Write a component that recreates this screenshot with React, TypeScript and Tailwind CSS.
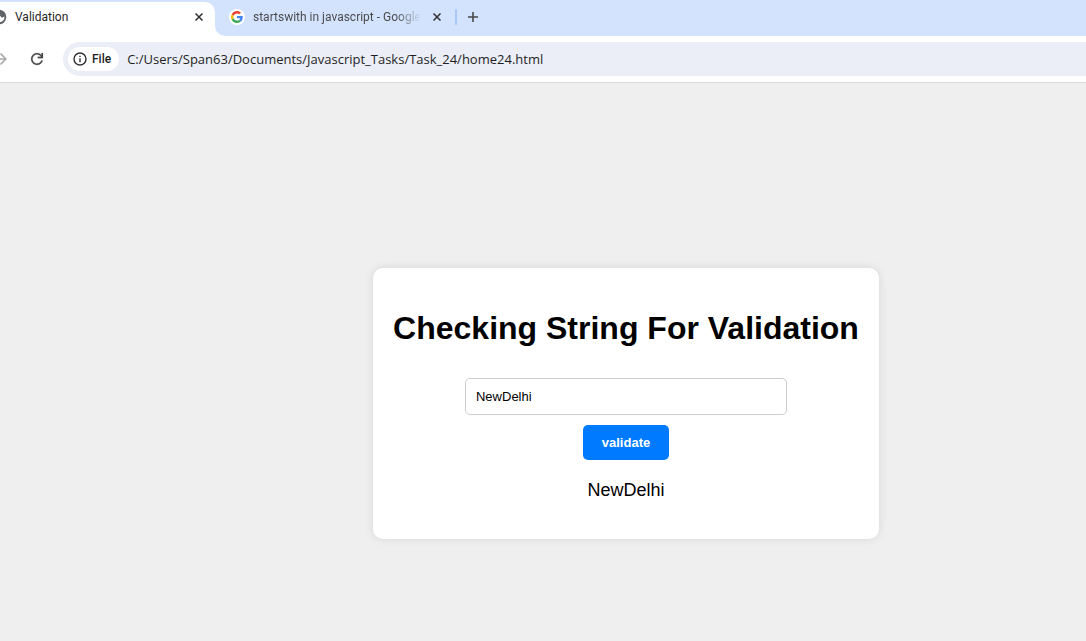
import { useState } from "react";

function GoogleMark() {
  return (
    <span className="flex size-4 shrink-0 items-center justify-center rounded-full bg-white">
      <svg viewBox="0 0 48 48" className="size-3" aria-hidden="true">
        <path fill="#EA4335" d="M24 9.5c3.54 0 6.71 1.22 9.21 3.6l6.85-6.85C35.9 2.38 30.47 0 24 0 14.62 0 6.51 5.38 2.56 13.22l7.98 6.19C12.43 13.72 17.74 9.5 24 9.5z" />
        <path fill="#4285F4" d="M46.98 24.55c0-1.57-.15-3.09-.38-4.55H24v9.02h12.94c-.58 2.96-2.26 5.48-4.78 7.18l7.73 6c4.51-4.18 7.09-10.36 7.09-17.65z" />
        <path fill="#FBBC05" d="M10.53 28.59c-.48-1.45-.76-2.99-.76-4.59s.27-3.14.76-4.59l-7.98-6.19C.92 16.46 0 20.12 0 24c0 3.88.92 7.54 2.56 10.78l7.97-6.19z" />
        <path fill="#34A853" d="M24 48c6.48 0 11.93-2.13 15.89-5.81l-7.73-6c-2.15 1.45-4.92 2.3-8.16 2.3-6.26 0-11.57-4.22-13.47-9.91l-7.98 6.19C6.51 42.62 14.62 48 24 48z" />
      </svg>
    </span>
  );
}

function CloseIcon() {
  return (
    <svg viewBox="0 0 8 8" className="size-2" fill="none" stroke="#303030" strokeWidth="1.5" aria-hidden="true">
      <path d="M0.5 0.5 7.5 7.5M7.5 0.5 0.5 7.5" />
    </svg>
  );
}

function TabStrip() {
  return (
    <div className="flex h-9 bg-white font-[Roboto,sans-serif] text-xs">
      <div className="flex w-[215px] shrink-0 bg-[#d3e3fd] pt-0.5">
        <div className="flex flex-1 items-center rounded-tr-[10px] bg-white pr-3 pb-1">
          <svg viewBox="0 0 7 16" className="mr-2 h-4 w-[7px] shrink-0" aria-hidden="true">
            <circle cx="-1" cy="8" r="7.3" fill="#5f6368" />
            <path d="M0 6.6 1.4 8.4h1.2l1.9-.9A5.8 5.8 0 0 1 0 13.2z" fill="#fff" />
          </svg>
          <span className="flex-1 text-[#1f1f1f]">Validation</span>
          <button type="button" aria-label="Close Validation">
            <CloseIcon />
          </button>
        </div>
      </div>
      <div className="flex flex-1 items-center rounded-bl-[10px] bg-[#d3e3fd] pt-0.5 pb-1 pl-[14px]">
        <GoogleMark />
        <span className="ml-2 w-[168px] bg-linear-to-r from-[#474747] from-85% to-transparent bg-clip-text whitespace-nowrap text-transparent">
          startswith in javascript - Google
        </span>
        <button type="button" aria-label="Close startswith in javascript" className="ml-3">
          <CloseIcon />
        </button>
        <span className="ml-[14px] h-4 w-0.5 rounded-full bg-[#a8c7fa]" />
        <button type="button" aria-label="New tab" className="ml-[11px]">
          <svg viewBox="0 0 10 10" className="size-[10px]" stroke="#474747" strokeWidth="1.6" aria-hidden="true">
            <path d="M5 0v10M0 5h10" />
          </svg>
        </button>
      </div>
    </div>
  );
}

function Toolbar() {
  return (
    <div className="flex h-[47px] items-center border-b border-[#dcdcdc] bg-white">
      <button type="button" aria-label="Forward" className="shrink-0">
        <svg viewBox="0 0 7 12" className="h-3 w-[7px]" fill="none" stroke="#a8a8a8" strokeWidth="1.6" aria-hidden="true">
          <path d="M0 6h6M0.5 0.6 5.9 6 0.5 11.4" />
        </svg>
      </button>
      <button type="button" aria-label="Reload" className="ml-[21px] shrink-0">
        <svg viewBox="0 0 24 24" className="size-[18px]" fill="#474747" stroke="#474747" strokeWidth="0.3" aria-hidden="true">
          <path d="M12 20q-3.35 0-5.675-2.325T4 12t2.325-5.675T12 4q1.725 0 3.3.713T18 6.75V4h2v7h-7V9h4.2q-.8-1.4-2.187-2.2T12 6Q9.5 6 7.75 7.75T6 12t1.75 4.25T12 18q1.925 0 3.475-1.1T17.65 14h2.1q-.7 2.65-2.85 4.325T12 20" />
        </svg>
      </button>
      <div className="ml-[17px] flex h-[34px] flex-1 items-center rounded-l-full bg-[#ebeef7] pl-[5px]">
        <button type="button" className="flex h-6 shrink-0 items-center gap-[5px] rounded-full bg-white pr-2 pl-[5px] font-[Roboto,sans-serif] text-xs font-medium text-[#1f1f1f]">
          <svg viewBox="0 0 14 14" className="size-[14px]" fill="none" stroke="#303030" strokeWidth="1.4" aria-hidden="true">
            <circle cx="7" cy="7" r="6" />
            <path d="M7 6.3v4M7 3.7v1.4" />
          </svg>
          File
        </button>
        <input
          aria-label="Address"
          defaultValue="C:/Users/Span63/Documents/Javascript_Tasks/Task_24/home24.html"
          className="ml-2 min-w-0 flex-1 bg-transparent pt-0.5 font-['Open_Sans',sans-serif] text-[13px] text-[#1f1f1f] outline-none"
        />
      </div>
    </div>
  );
}

export default function App() {
  const [value, setValue] = useState("NewDelhi");
  const [result, setResult] = useState("NewDelhi");

  return (
    <div className="flex min-h-screen flex-col bg-[#efefef]">
      <header>
        <TabStrip />
        <Toolbar />
      </header>
      <main className="flex flex-1 items-start justify-center pt-[185px] pb-[102px] pl-[166px] font-['Liberation_Sans',Arial,sans-serif] text-black">
        <form
          className="flex flex-col items-center rounded-[10px] bg-white px-5 pt-[42px] pb-[38px] shadow-[0_0_10px_rgba(0,0,0,0.1)]"
          onSubmit={(e) => {
            e.preventDefault();
            setResult(value);
          }}
        >
          <h1 className="text-[32px] leading-[37px] font-bold">Checking String For Validation</h1>
          <input
            aria-label="String to validate"
            value={value}
            onChange={(e) => setValue(e.target.value)}
            className="mt-[31px] h-[37px] w-[322px] rounded-[5px] border border-[#ccc] px-2.5 text-[13px]"
          />
          <button type="submit" className="mt-2.5 h-[35px] rounded-[5px] bg-[#007bff] px-[19px] text-[13px] font-bold text-white">
            validate
          </button>
          <p className="mt-5 text-lg leading-[21px]">{result}</p>
        </form>
      </main>
    </div>
  );
}
